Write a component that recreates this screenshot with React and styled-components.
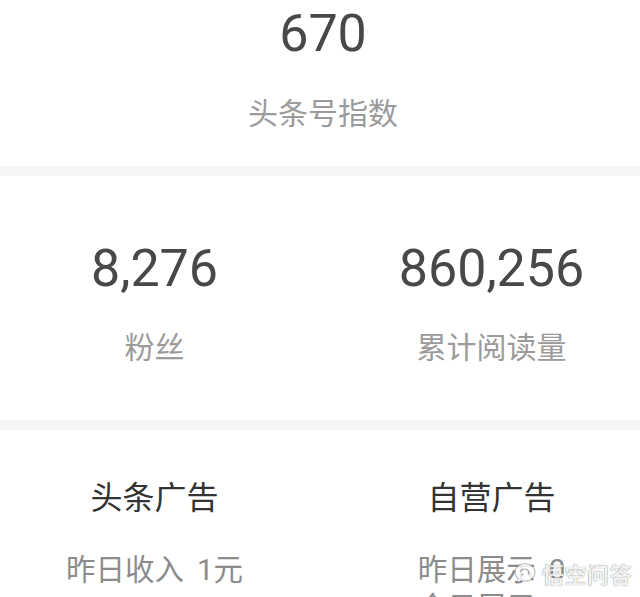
import React from "react";
import styled, { createGlobalStyle } from "styled-components";

const Global = createGlobalStyle`
  html, body { margin: 0; padding: 0; background: #ffffff; }
  body { overflow: hidden; font-family: "Noto Sans CJK SC", "Noto Sans", sans-serif; }
`;

const Page = styled.div`
  position: relative;
  width: 640px;
  height: 597px;
  overflow: hidden;
  background: #ffffff;
`;

const IndexSection = styled.section`
  display: flex;
  flex-direction: column;
  align-items: center;
  padding: 8px 0 40px 6px;
`;

const BigNumber = styled.div`
  font-family: Roboto, "Liberation Sans", sans-serif;
  font-size: 52px;
  line-height: 52px;
  color: #484848;
`;

const Label = styled.div`
  margin-top: ${(p) => p.$gap}px;
  font-family: "Noto Sans CJK SC", sans-serif;
  font-size: 30px;
  line-height: 30px;
  color: #9b9b9b;
`;

const Divider = styled.div`
  height: 10px;
  background: #f4f5f7;
`;

const Grid = styled.div`
  display: grid;
  grid-template-columns: 1fr 1fr;
  width: 674px;
  margin-left: -14px;
  padding-top: ${(p) => p.$top}px;
  padding-bottom: ${(p) => p.$bottom}px;
`;

const Cell = styled.div`
  display: flex;
  flex-direction: column;
  align-items: center;
`;

const AdTitle = styled.div`
  font-family: "Noto Sans CJK SC", sans-serif;
  font-size: 32px;
  line-height: 32px;
  color: #333333;
  margin-bottom: 40px;
`;

const AdLine = styled.div`
  font-family: Roboto, "Noto Sans CJK SC", sans-serif;
  font-size: 29.5px;
  line-height: 38px;
  color: #8c8c8c;
  white-space: nowrap;
`;

const Value = styled.span`
  margin-left: 13px;
`;

const Watermark = styled.div`
  position: absolute;
  right: 8px;
  top: 561px;
  display: flex;
  align-items: center;
  gap: 4px;
  opacity: 0.9;
`;

const WatermarkText = styled.span`
  font-family: "Noto Sans CJK SC", sans-serif;
  font-size: 22px;
  line-height: 24px;
  font-weight: 700;
  color: rgba(255, 255, 255, 0.92);
  text-shadow: 0 0 1px rgba(0, 0, 0, 0.45), 0 0 1px rgba(0, 0, 0, 0.3);
  letter-spacing: 0.5px;
`;

function Logo() {
  return (
    <svg width="26" height="24" viewBox="0 0 26 24">
      <path
        d="M13 2.5c-5.6 0-10 3.9-10 8.8 0 2.6 1.2 4.9 3.2 6.5L5 22l4.6-2.2c1.1.3 2.2.4 3.4.4 5.6 0 10-3.9 10-8.8S18.6 2.5 13 2.5z"
        fill="rgba(255,255,255,0.9)"
        stroke="rgba(0,0,0,0.28)"
        strokeWidth="1.2"
      />
      <path
        d="M8.5 10.5c1.2-2.2 4.2-3.1 6.6-1.8 1.9 1 2.4 3.2 1.2 4.6"
        fill="none"
        stroke="rgba(0,0,0,0.3)"
        strokeWidth="1.4"
        strokeLinecap="round"
      />
      <circle cx="10.5" cy="13.5" r="1.2" fill="rgba(0,0,0,0.25)" />
    </svg>
  );
}

export default function App() {
  return (
    <Page>
      <Global />
      <IndexSection>
        <BigNumber>670</BigNumber>
        <Label $gap={36}>头条号指数</Label>
      </IndexSection>
      <Divider />
      <Grid $top={67} $bottom={60}>
        <Cell>
          <BigNumber>8,276</BigNumber>
          <Label $gap={35}>粉丝</Label>
        </Cell>
        <Cell>
          <BigNumber>860,256</BigNumber>
          <Label $gap={35}>累计阅读量</Label>
        </Cell>
      </Grid>
      <Divider />
      <Grid $top={49} $bottom={0}>
        <Cell>
          <AdTitle>头条广告</AdTitle>
          <AdLine>
            昨日收入<Value>1元</Value>
          </AdLine>
        </Cell>
        <Cell>
          <AdTitle>自营广告</AdTitle>
          <AdLine>
            昨日展示<Value>0</Value>
          </AdLine>
          <AdLine>
            今日展示<Value>0</Value>
          </AdLine>
        </Cell>
      </Grid>
      <Watermark>
        <Logo />
        <WatermarkText>悟空问答</WatermarkText>
      </Watermark>
    </Page>
  );
}
